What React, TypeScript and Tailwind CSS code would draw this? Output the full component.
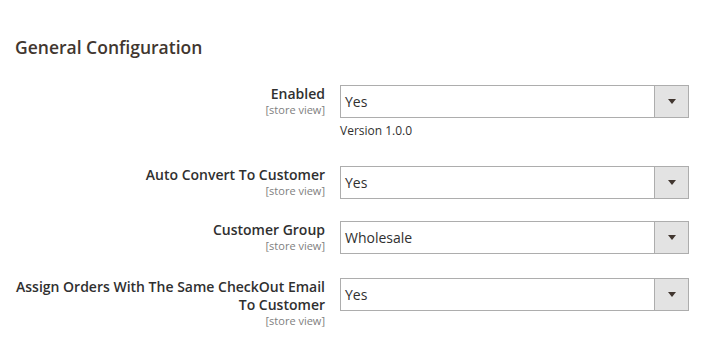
const rows = [
  { label: ['Enabled'], value: 'Yes', note: 'Version 1.0.0', mt: 'mt-[26px]' },
  { label: ['Auto Convert To Customer'], value: 'Yes', mt: 'mt-[27px]' },
  { label: ['Customer Group'], value: 'Wholesale', mt: 'mt-[22px]' },
  { label: ['Assign Orders With The Same CheckOut Email', 'To Customer'], value: 'Yes', mt: 'mt-[24px]' },
]

function Select({ value }: { value: string }) {
  return (
    <div className="flex h-[33px] w-[349px] border border-[#adadad] bg-white">
      <div className="flex flex-1 items-center pl-[4px] text-[14px] text-[#303030]">{value}</div>
      <div className="flex w-[34px] items-center justify-center border-l border-[#adadad] bg-[#e3e3e3]">
        <span className="block h-0 w-0 border-x-[4px] border-t-[5px] border-x-transparent border-t-[#41362f]" />
      </div>
    </div>
  )
}

export default function App() {
  return (
    <div className="min-h-[339px] bg-white px-[15px] pt-[36px] font-['Open_Sans',sans-serif]">
      <h2 className="text-[17.5px] font-semibold leading-[23px] text-[#41362f]">General Configuration</h2>

      {rows.map((r, i) => (
        <div key={i} className={`flex ${r.mt}`}>
          <div className="w-[310px] text-right">
            {r.label.map((l, j) => (
              <div key={j} className="text-[14px] font-semibold leading-[18px] text-[#303030]">
                {l}
              </div>
            ))}
            <div className="text-[11px] leading-[13px] text-[#808080]">[store view]</div>
          </div>
          <div className="ml-[15px]">
            <Select value={r.value} />
            {r.note && <div className="mt-[5px] text-[12px] leading-[16px] text-[#303030]">{r.note}</div>}
          </div>
        </div>
      ))}
    </div>
  )
}
